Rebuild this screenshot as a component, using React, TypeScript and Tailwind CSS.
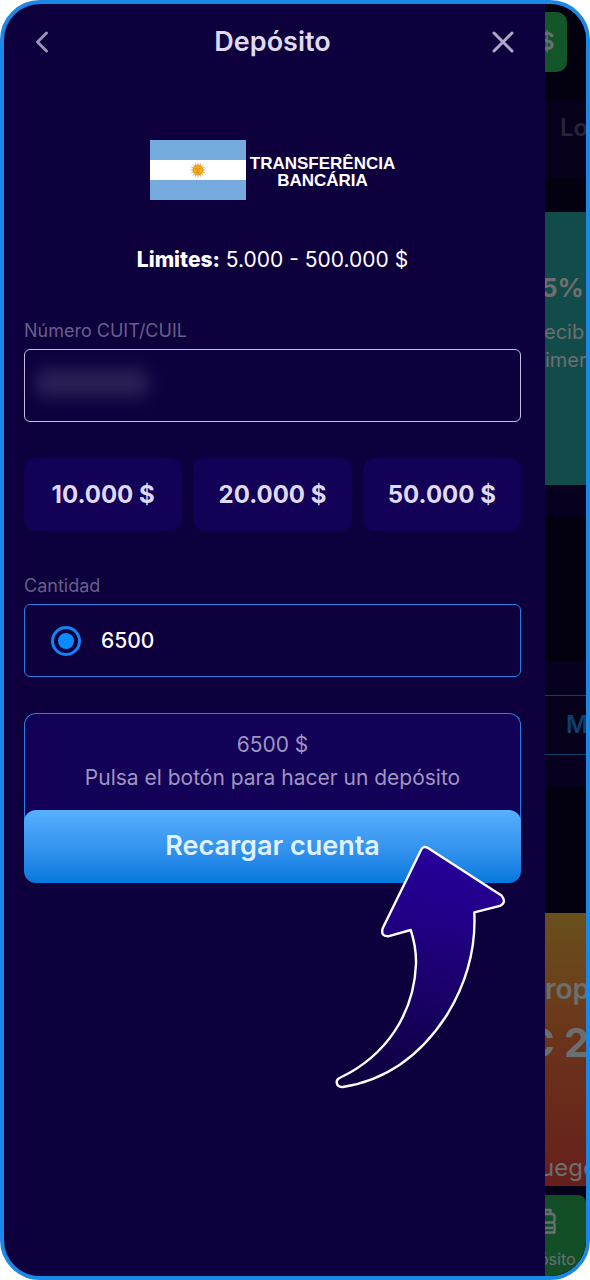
import React, { useState } from 'react';
import { ChevronLeft, X } from 'lucide-react';

const amounts = ['10.000', '20.000', '50.000'];
const rays = Array.from({ length: 16 }, (_, i) => (i * 360) / 16);

function Flag() {
  return (
    <svg viewBox="0 0 96 60" className="w-24 h-[60px] shrink-0" aria-hidden="true">
      <rect width="96" height="60" fill="#75aadd" />
      <rect y="20" width="96" height="20" fill="#fff" />
      {rays.map((angle) => (
        <path key={angle} d="M46.8 30 L48 21.3 L49.2 30 Z" fill="#d99a35" transform={`rotate(${angle} 48 30)`} />
      ))}
      <circle cx="48" cy="30" r="5" fill="#f5ac0c" stroke="#c98a25" strokeWidth="0.6" />
      <path d="M45.5 28.5h1.6M49 28.5h1.6M48 29v1.6M46.5 32q1.5 1 3 0" stroke="#a9701b" strokeWidth="0.6" fill="none" />
    </svg>
  );
}

function Arrow() {
  return (
    <svg
      viewBox="0 0 172 244"
      className="absolute right-[14px] top-[35px] w-[172px] h-[244px] pointer-events-none"
      aria-hidden="true"
    >
      <defs>
        <linearGradient id="arrow" x1="0.6" y1="0" x2="0.45" y2="1">
          <stop offset="0" stopColor="#27009b" />
          <stop offset="0.3" stopColor="#210086" />
          <stop offset="0.75" stopColor="#150058" />
          <stop offset="1" stopColor="#0f0040" />
        </linearGradient>
      </defs>
      <path
        d="M86.3 4.5 Q88.5 0.5 93 3 L166.5 50.5 Q172 57.5 165 60.8 L139.3 67.3 C141 103 133 135 112.5 169 C87 209 53 235 7.7 242 C1 242 -0.5 235 5.5 232.5 C50 211 79 170 81 119 C81.3 107 79 95 75.7 85 L53 91.3 Q45.5 91.5 47.7 83.3 Z"
        fill="url(#arrow)"
        stroke="#fff"
        strokeWidth="2.4"
        strokeLinejoin="round"
      />
    </svg>
  );
}

function Backdrop() {
  return (
    <aside className="w-[41px] shrink-0 flex flex-col overflow-hidden whitespace-nowrap bg-[#03000f] text-[#6b6f70]">
      <div className="h-24 pt-2">
        <div className="w-[22px] h-[60px] rounded-r-[10px] bg-[#12562a] flex items-center overflow-hidden">
          <span className="-ml-1.5 text-2xl font-semibold">$</span>
        </div>
      </div>
      <div className="h-[78px] bg-[#06001b] pt-3 pl-[15px] text-2xl font-semibold leading-8 text-[#29233c]">Lo</div>
      <div className="h-[34px]" />
      <div className="h-[273px] bg-[#124c4a] pt-[58px]">
        <p className="-ml-1 text-[26px] leading-9 font-bold">5%</p>
        <p className="-ml-px mt-3 text-xl leading-7">ecib</p>
        <p className="text-xl leading-7">imer</p>
      </div>
      <div className="h-8 bg-[#08001f]" />
      <div className="h-36" />
      <div className="h-[34px] bg-[#08001f]" />
      <div className="h-[60px] border-y border-[#0d416d] bg-[#06001b] flex items-center pl-[21px] text-2xl font-semibold text-[#0d416d]">
        M
      </div>
      <div className="h-8 bg-[#08001f]" />
      <div className="h-[126px]" />
      <div className="h-[273px] bg-linear-to-b from-[#69501c] via-[#6a321b] to-[#661f1b] flex flex-col pt-[58px]">
        <p className="text-[28px] leading-9 font-semibold">rop</p>
        <p className="-ml-5 mt-3.5 text-[40px] leading-[44px] font-bold">C 2</p>
        <p className="-ml-[5px] mt-auto text-2xl leading-9">uego</p>
      </div>
      <div className="h-[9px] bg-[#06001b]" />
      <div className="grow bg-[#124f27] rounded-tr-lg pt-3">
        <svg viewBox="0 0 24 30" className="-ml-3 w-6 h-[30px]" fill="none" stroke="#6b6f70" strokeWidth="2.4" strokeLinejoin="round" aria-hidden="true">
          <path d="M12 6V3h5.500v3M9 7h11l1.500 2v5l-1.500 1.500 1.500 1.500v8.500H9M9 15.500h11M9 21h11" />
        </svg>
        <p className="-ml-1.5 mt-2 text-base leading-7">ósito</p>
      </div>
    </aside>
  );
}

function App() {
  const [cuit, setCuit] = useState('');
  const [amount, setAmount] = useState('6500');

  return (
    <div className="min-h-screen flex bg-white font-[Inter,Roboto,sans-serif]">
      <div className="grow flex overflow-hidden rounded-[40px] border-4 border-[#1b87e6] bg-[#0e003d]">
        <main className="grow min-w-0 pl-5 pr-6 pb-8 text-white">
          <header className="h-[76px] flex items-center justify-between">
            <button type="button" aria-label="Volver" className="w-9 text-[#9c94b4]">
              <ChevronLeft className="size-9" strokeWidth={2} />
            </button>
            <h1 className="text-[27px] font-semibold text-[#dfdaee]">Depósito</h1>
            <button type="button" aria-label="Cerrar" className="w-9 text-[#b0a9c5]">
              <X className="size-9" strokeWidth={2} />
            </button>
          </header>

          <div className="mt-[60px] flex items-center justify-center gap-1">
            <Flag />
            <p className="pt-1 font-['Liberation_Sans',Arial,sans-serif] text-[17px] leading-[17px] font-bold text-center">
              TRANSFERÊNCIA
              <br />
              BANCÁRIA
            </p>
          </div>

          <p className="mt-11 text-center text-[21px] leading-8">
            <strong className="font-extrabold">Limites:</strong> 5.000 - 500.000 $
          </p>

          <label htmlFor="cuit" className="mt-[43px] block text-lg leading-6 text-[#685f8a]">
            Número CUIT/CUIL
          </label>
          <div className="relative mt-[6px]">
            <input
              id="cuit"
              value={cuit}
              onChange={(e) => setCuit(e.target.value)}
              className="block w-full h-[73px] rounded-md border border-[#c5bede] bg-transparent px-3 text-[21px]"
            />
            <div className="absolute left-3 top-5 w-28 h-7 rounded-lg bg-[#2b2056] blur-[8px] pointer-events-none" />
          </div>

          <div className="mt-9 grid grid-cols-3 gap-[11px]">
            {amounts.map((value) => (
              <button
                key={value}
                type="button"
                onClick={() => setAmount(value.replace('.', ''))}
                className="h-[73px] rounded-xl bg-[#130057] text-2xl font-bold text-[#dfdaf0]"
              >
                {value} $
              </button>
            ))}
          </div>

          <label htmlFor="amount" className="mt-[43px] block text-lg leading-6 text-[#685f8a]">
            Cantidad
          </label>
          <div className="mt-[6px] h-[73px] flex items-center gap-5 rounded-md border border-[#2a7fe4] px-[26px]">
            <input
              type="radio"
              name="custom"
              aria-label="Otra cantidad"
              defaultChecked
              className="appearance-none size-[30px] shrink-0 rounded-full border-[3px] border-[#0f86f5] bg-[#0a8cff] bg-clip-content p-1"
            />
            <input
              id="amount"
              value={amount}
              onChange={(e) => setAmount(e.target.value)}
              className="grow min-w-0 bg-transparent text-[21px] font-medium outline-none"
            />
          </div>

          <div className="relative mt-9">
            <div className="h-28 rounded-t-xl border border-b-0 border-[#2a7fe4] bg-[#130057] pt-[14px] text-center text-[21px] leading-[33px] text-[#a095c0]">
              <p>{amount} $</p>
              <p>Pulsa el botón para hacer un depósito</p>
            </div>
            <div className="relative -mt-[15px]">
              <button
                type="button"
                className="w-full h-[73px] rounded-xl bg-linear-to-b from-[#57b0ff] to-[#0079de] text-[27px] font-semibold text-[#e0f1ff]"
              >
                Recargar cuenta
              </button>
              <Arrow />
            </div>
          </div>
        </main>
        <Backdrop />
      </div>
    </div>
  );
}

export default App;
